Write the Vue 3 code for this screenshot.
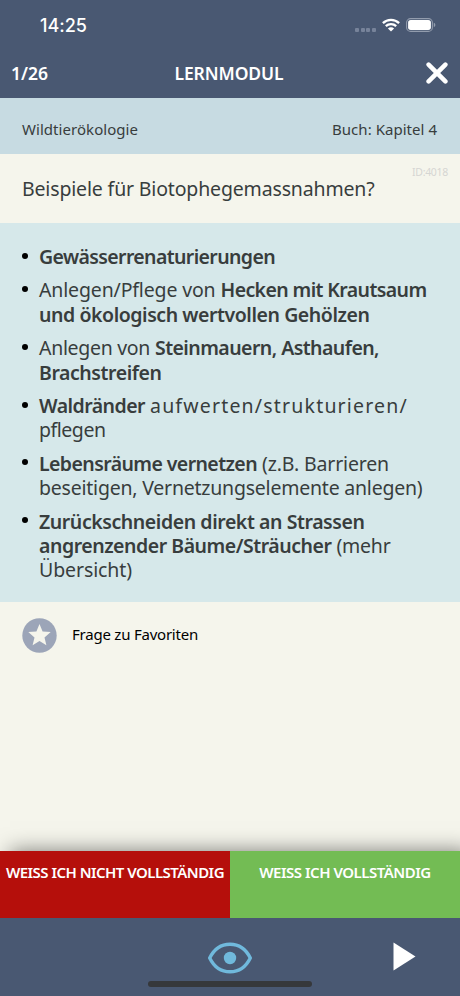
<script setup>
// Sets tracking so that a label fills its intended measure.
const vFit = {
  mounted(el, { value }) {
    const count = el.textContent.length
    const natural = el.getBoundingClientRect().width
    el.style.letterSpacing = `${(value - natural) / count}px`
  }
}

const answers = [
  [[{ t: 'Gewässerrenaturierungen', w: 236, b: true }]],
  [
    [{ t: 'Anlegen/Pflege von', w: 176.5 }, { t: 'Hecken mit Krautsaum', w: 206, b: true }],
    [{ t: 'und ökologisch wertvollen Gehölzen', w: 330.5, b: true }]
  ],
  [
    [{ t: 'Anlegen von', w: 111 }, { t: 'Steinmauern, Asthaufen,', w: 224, b: true }],
    [{ t: 'Brachstreifen', w: 122.5, b: true }]
  ],
  [
    [{ t: 'Waldränder', w: 106, b: true }, { t: 'aufwerten/strukturieren/', w: 258 }],
    [{ t: 'pflegen', w: 66.5 }]
  ],
  [
    [{ t: 'Lebensräume vernetzen', w: 218, b: true }, { t: '(z.B. Barrieren', w: 127 }],
    [{ t: 'beseitigen, Vernetzungselemente anlegen)', w: 383.5 }]
  ],
  [
    [{ t: 'Zurückschneiden direkt an Strassen', w: 325.5, b: true }],
    [{ t: 'angrenzender Bäume/Sträucher', w: 292.5, b: true }, { t: '(mehr', w: 54 }],
    [{ t: 'Übersicht)', w: 93 }]
  ]
]
</script>

<template>
  <div class="screen">
    <div class="status">
      <span v-fit="47" class="time">14:25</span>
      <div class="indicators">
        <span class="cell"><i></i><i></i><i></i><i></i></span>
        <svg class="wifi" width="18" height="14" viewBox="0 0 18 14">
          <g fill="none" stroke="#fff" stroke-width="2.3">
            <path d="M.9 5.1A11.6 11.6 0 0 1 17.1 5.1" />
            <path d="M3.8 8.2a7.5 7.5 0 0 1 10.4 0" />
          </g>
          <path d="M9 13.6 5.9 10.5a4.4 4.4 0 0 1 6.2 0Z" fill="#fff" />
        </svg>
        <svg class="battery" width="30" height="14" viewBox="0 0 30 14">
          <rect x=".6" y=".6" width="25.8" height="12.8" rx="4" fill="none" stroke="#929cad" stroke-width="1.1" />
          <rect x="2.1" y="2.1" width="22.8" height="9.8" rx="2.6" fill="#fff" />
          <path d="M27.8 4.8v4.4q1.6-.6 1.6-2.2t-1.6-2.2Z" fill="#929cad" />
        </svg>
      </div>
    </div>
    <header class="header">
      <span v-fit="37" class="count">1/26</span>
      <span v-fit="110" class="title">LERNMODUL</span>
      <svg class="close" width="22" height="22" viewBox="0 0 22 22">
        <path d="m2.6 2.6 16.8 16.8M19.4 2.6 2.6 19.4" stroke="#fff" stroke-width="4.5" stroke-linecap="round" />
      </svg>
    </header>
    <div class="meta">
      <span v-fit="116">Wildtierökologie</span>
      <span v-fit="105">Buch: Kapitel 4</span>
    </div>
    <div class="question">
      <span v-fit="352.5" class="prompt">Beispiele für Biotophegemassnahmen?</span>
      <span v-fit="36" class="id">ID:4018</span>
    </div>
    <ul class="answers">
      <li v-for="(lines, i) in answers" :key="i">
        <div v-for="(line, j) in lines" :key="j" class="line">
          <span v-for="part in line" :key="part.t" v-fit="part.w" :class="{ strong: part.b }">{{ part.t }}</span>
        </div>
      </li>
    </ul>
    <main class="rest">
      <div class="favorite">
        <svg width="35" height="35" viewBox="0 0 35 35">
          <circle cx="17.5" cy="17.5" r="17.2" fill="#9ca5b8" />
          <path d="m17.5 6 3.1 7.5 8.1.6-6.2 5.3 1.9 7.9-6.9-4.3-6.9 4.3 1.9-7.9-6.2-5.3 8.1-.6Z" fill="#f5f5ec" />
        </svg>
        <span v-fit="126">Frage zu Favoriten</span>
      </div>
    </main>
    <div class="choices">
      <button class="no"><span v-fit="218">WEISS ICH NICHT VOLLSTÄNDIG</span></button>
      <button class="yes"><span v-fit="171.5">WEISS ICH VOLLSTÄNDIG</span></button>
    </div>
    <footer class="footer">
      <svg class="eye" width="44" height="32" viewBox="0 0 44 32">
        <path d="M1.7 16C6 7.2 13.5 2.2 22 2.2s16 5 20.3 13.8C38 24.800 30.500 29.800 22 29.800S6 24.800 1.700 16Z" fill="none" stroke="#70b9dc" stroke-width="3.4" stroke-linejoin="round" />
        <circle cx="22" cy="16" r="6.200" fill="#70b9dc" />
      </svg>
      <svg class="play" width="23" height="29" viewBox="0 0 23 29">
        <path d="M.5.5 22.500 14.500.5 28.500Z" fill="#fff" />
      </svg>
      <div class="home"></div>
    </footer>
  </div>
</template>

<style>
body {
  margin: 0;
}
</style>

<style scoped>
.screen {
  width: 460px;
  height: 996px;
  display: flex;
  flex-direction: column;
  overflow: hidden;
  background: #f5f5ec;
  color: #383d3d;
  font-family: "Noto Sans", "Open Sans", sans-serif;
}
span {
  white-space: nowrap;
}
.status {
  height: 50px;
  flex: none;
  box-sizing: border-box;
  padding: 15px 24px 0 40px;
  display: flex;
  justify-content: space-between;
  background: #495872;
  color: #fff;
}
.time {
  font: 500 18px/22px Inter, sans-serif;
}
.indicators {
  display: flex;
  align-items: flex-start;
  padding-top: 3px;
}
.cell {
  display: flex;
  gap: 1.6px;
  margin: 10px 6px 0 0;
}
.cell i {
  width: 4px;
  height: 4px;
  border-radius: 1px;
  background: #77839a;
}
.wifi {
  margin-right: 6px;
}
.header {
  height: 48px;
  flex: none;
  box-sizing: border-box;
  padding: 0 12px 2px 11px;
  display: grid;
  grid-template-columns: 1fr auto 1fr;
  align-items: center;
  background: #495872;
  color: #fff;
  font-size: 17.500px;
  font-weight: 600;
  line-height: 46px;
}
.count,
.close {
  justify-self: start;
}
.close {
  justify-self: end;
}
.title {
  padding-right: 1px;
}
.meta {
  height: 55.500px;
  flex: none;
  box-sizing: border-box;
  padding: 9px 23px 0 22px;
  display: flex;
  justify-content: space-between;
  background: #c7dbe2;
  font-size: 15px;
  line-height: 44px;
}
.question {
  height: 69.500px;
  flex: none;
  box-sizing: border-box;
  padding: 0 12px 0 22px;
  display: flex;
  justify-content: space-between;
}
.prompt {
  font-size: 19.500px;
  line-height: 69px;
}
.id {
  padding-top: 10px;
  color: #d5d6d3;
  font-size: 10.500px;
  line-height: 16px;
}
.answers {
  height: 379px;
  flex: none;
  box-sizing: border-box;
  margin: 0;
  padding: 22px 0 0 39px;
  list-style: none;
  background: #d6e8ea;
  font-size: 19.500px;
  line-height: 24.400px;
}
.answers li {
  position: relative;
  margin-bottom: 9px;
}
.answers li::before {
  content: "";
  position: absolute;
  left: -17px;
  top: 7.500px;
  width: 6px;
  height: 6px;
  border-radius: 50%;
  background: #000;
}
.line {
  display: flex;
  gap: 5px;
}
.strong {
  font-weight: 600;
}
.rest {
  flex: 1;
}
.favorite {
  padding: 16px 22px;
  display: flex;
  gap: 15px;
  color: #000;
  font-size: 15px;
  line-height: 32px;
}
.choices {
  height: 67px;
  flex: none;
  display: grid;
  grid-template-columns: 1fr 1fr;
  box-shadow: 10px 0 20px rgba(0, 0, 0, 0.5);
}
.choices button {
  border: 0;
  padding: 8px 0 0;
  display: flex;
  justify-content: center;
  align-items: flex-start;
  color: #fff;
  font-family: inherit;
  font-size: 15px;
  font-weight: 600;
  line-height: 26px;
}
.no {
  background: #b50f0b;
}
.yes {
  background: #73bc54;
}
.footer {
  position: relative;
  height: 78px;
  flex: none;
  box-sizing: border-box;
  padding: 24px 44px 0 208px;
  display: flex;
  justify-content: space-between;
  align-items: flex-start;
  background: #495872;
}
.home {
  position: absolute;
  left: 148px;
  bottom: 9px;
  width: 164px;
  height: 6px;
  border-radius: 3px;
  background: #36383b;
}
</style>
